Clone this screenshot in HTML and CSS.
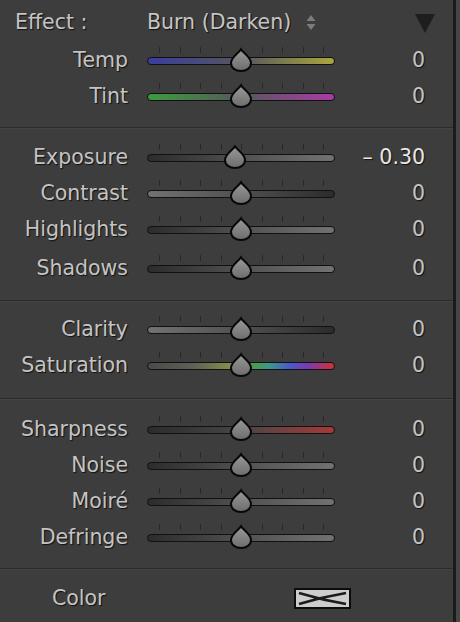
FILE: index.html
```html
<!DOCTYPE html>
<html>
<head>
<meta charset="utf-8">
<link rel="stylesheet" href="styles.css">
</head>
<body>
<div class="frame">
  <div class="panel">
    <section class="sec sec1">
      <div class="effect-row">
        <span class="effect-label">Effect :</span>
        <span class="effect-value">Burn (Darken)</span>
        <svg class="updown" width="10" height="16" viewBox="0 0 10 16"><path d="M5 0 L9.5 6 L0.5 6 Z M0.5 9 L9.5 9 L5 15 Z" fill="#7c7c7c"/></svg>
        <svg class="collapse" width="20" height="20" viewBox="0 0 20 20"><path d="M0 0 L20 0 L10 19 Z" fill="#1e1e1e"/></svg>
      </div>
      <div class="row">
        <span class="label">Temp</span>
        <div class="slider"><div class="ticks"><i></i><i></i><i></i><i></i><i></i><i></i><i></i><i></i><i></i></div><div class="track g-temp"></div><svg class="thumb" style="left:83px" width="22" height="24" viewBox="0 0 22 24"><use href="#thumb"/></svg></div>
        <span class="value">0</span>
      </div>
      <div class="row">
        <span class="label">Tint</span>
        <div class="slider"><div class="ticks"><i></i><i></i><i></i><i></i><i></i><i></i><i></i><i></i><i></i></div><div class="track g-tint"></div><svg class="thumb" style="left:83px" width="22" height="24" viewBox="0 0 22 24"><use href="#thumb"/></svg></div>
        <span class="value">0</span>
      </div>
    </section>
    <section class="sec sec2">
      <div class="row">
        <span class="label">Exposure</span>
        <div class="slider"><div class="ticks"><i></i><i></i><i></i><i></i><i></i><i></i><i></i><i></i><i></i></div><div class="track g-dl"></div><svg class="thumb" style="left:77px" width="22" height="24" viewBox="0 0 22 24"><use href="#thumb"/></svg></div>
        <span class="value bright">– 0.30</span>
      </div>
      <div class="row">
        <span class="label">Contrast</span>
        <div class="slider"><div class="ticks"><i></i><i></i><i></i><i></i><i></i><i></i><i></i><i></i><i></i></div><div class="track g-ld"></div><svg class="thumb" style="left:83px" width="22" height="24" viewBox="0 0 22 24"><use href="#thumb"/></svg></div>
        <span class="value">0</span>
      </div>
      <div class="row">
        <span class="label">Highlights</span>
        <div class="slider"><div class="ticks"><i></i><i></i><i></i><i></i><i></i><i></i><i></i><i></i><i></i></div><div class="track g-dl"></div><svg class="thumb" style="left:83px" width="22" height="24" viewBox="0 0 22 24"><use href="#thumb"/></svg></div>
        <span class="value">0</span>
      </div>
      <div class="row row-shadows">
        <span class="label">Shadows</span>
        <div class="slider"><div class="ticks"><i></i><i></i><i></i><i></i><i></i><i></i><i></i><i></i><i></i></div><div class="track g-dl"></div><svg class="thumb" style="left:83px" width="22" height="24" viewBox="0 0 22 24"><use href="#thumb"/></svg></div>
        <span class="value">0</span>
      </div>
    </section>
    <section class="sec sec3">
      <div class="row">
        <span class="label">Clarity</span>
        <div class="slider"><div class="ticks"><i></i><i></i><i></i><i></i><i></i><i></i><i></i><i></i><i></i></div><div class="track g-ld"></div><svg class="thumb" style="left:83px" width="22" height="24" viewBox="0 0 22 24"><use href="#thumb"/></svg></div>
        <span class="value">0</span>
      </div>
      <div class="row">
        <span class="label">Saturation</span>
        <div class="slider"><div class="ticks"><i></i><i></i><i></i><i></i><i></i><i></i><i></i><i></i><i></i></div><div class="track g-sat"></div><svg class="thumb" style="left:83px" width="22" height="24" viewBox="0 0 22 24"><use href="#thumb"/></svg></div>
        <span class="value">0</span>
      </div>
    </section>
    <section class="sec sec4">
      <div class="row">
        <span class="label">Sharpness</span>
        <div class="slider"><div class="ticks"><i></i><i></i><i></i><i></i><i></i><i></i><i></i><i></i><i></i></div><div class="track g-sharp"></div><svg class="thumb" style="left:83px" width="22" height="24" viewBox="0 0 22 24"><use href="#thumb"/></svg></div>
        <span class="value">0</span>
      </div>
      <div class="row">
        <span class="label">Noise</span>
        <div class="slider"><div class="ticks"><i></i><i></i><i></i><i></i><i></i><i></i><i></i><i></i><i></i></div><div class="track g-dl"></div><svg class="thumb" style="left:83px" width="22" height="24" viewBox="0 0 22 24"><use href="#thumb"/></svg></div>
        <span class="value">0</span>
      </div>
      <div class="row">
        <span class="label">Moiré</span>
        <div class="slider"><div class="ticks"><i></i><i></i><i></i><i></i><i></i><i></i><i></i><i></i><i></i></div><div class="track g-dl"></div><svg class="thumb" style="left:83px" width="22" height="24" viewBox="0 0 22 24"><use href="#thumb"/></svg></div>
        <span class="value">0</span>
      </div>
      <div class="row">
        <span class="label">Defringe</span>
        <div class="slider"><div class="ticks"><i></i><i></i><i></i><i></i><i></i><i></i><i></i><i></i><i></i></div><div class="track g-dl"></div><svg class="thumb" style="left:83px" width="22" height="24" viewBox="0 0 22 24"><use href="#thumb"/></svg></div>
        <span class="value">0</span>
      </div>
    </section>
    <section class="sec sec5">
      <div class="color-row">
        <span class="color-label">Color</span>
        <svg class="swatch" width="57" height="21" viewBox="0 0 57 21">
          <rect x="1" y="1" width="55" height="19" fill="#cdcdcd" stroke="#0c0c0c" stroke-width="2"/>
          <path d="M5 5 Q28 12 52 16 M5 16 Q28 9 52 5" fill="none" stroke="#1c1c1c" stroke-width="2.6"/>
        </svg>
      </div>
    </section>
  </div>
  <div class="edge"></div>
  <div class="edge2"></div>
</div>
<svg width="0" height="0" class="defs">
  <defs>
    <linearGradient id="tg" x1="0" y1="0" x2="0" y2="1">
      <stop offset="0" stop-color="#9a9a9a"/>
      <stop offset="1" stop-color="#6c6c6c"/>
    </linearGradient>
    <symbol id="thumb" viewBox="0 0 22 24">
      <path d="M11 1.2 C12.6 4.6 21 9 21 15 C21 20 16.5 23 11 23 C5.5 23 1 20 1 15 C1 9 9.4 4.6 11 1.2 Z" fill="url(#tg)" stroke="#080808" stroke-width="2"/>
    </symbol>
  </defs>
</svg>
</body>
</html>
```
FILE: styles.css
```css
html, body {
  margin: 0;
  padding: 0;
  background: #3d3d3d;
}
body {
  width: 460px;
  height: 622px;
  overflow: hidden;
  font-family: "DejaVu Sans", "Liberation Sans", sans-serif;
  font-size: 20.5px;
  color: #c4c4c4;
}
.frame {
  display: flex;
  height: 622px;
}
.panel {
  width: 453px;
  display: flex;
  flex-direction: column;
}
.edge {
  width: 3px;
  background: #1b1b1b;
}
.edge2 {
  width: 4px;
  background: #464646;
}
.defs {
  position: absolute;
}
.sec {
  display: flex;
  flex-direction: column;
}
.sec + .sec {
  border-top: 1px solid #2b2b2b;
  box-shadow: inset 0 1px 0 #444;
}
.sec1 { padding: 4px 0 13px; }
.sec2 { padding: 11px 0 14px; }
.sec3 { padding: 10px 0 15px; }
.sec4 { padding: 12px 0 13px; }
.sec5 { padding: 11px 0 0; flex: 1; }

.effect-row {
  height: 36px;
  display: flex;
  align-items: center;
  margin-bottom: 2px;
}
.effect-label {
  margin-left: 15px;
  width: 132px;
  text-shadow: 1px 1px 1px #111;
}
.effect-value {
  text-shadow: 1px 1px 1px #111;
}
.updown {
  margin-left: 15px;
  margin-top: 1px;
}
.collapse {
  margin-left: 99px;
  margin-top: 3px;
}

.row {
  height: 36px;
  display: flex;
  align-items: center;
}
.row-shadows {
  margin-top: 3px;
}
.label {
  width: 128px;
  text-align: right;
  text-shadow: 1px 1px 1px #111;
}
.slider {
  position: relative;
  width: 188px;
  margin-left: 19px;
  align-self: stretch;
  padding-top: 5px;
  box-sizing: border-box;
}
.ticks {
  height: 6px;
  display: flex;
  justify-content: space-between;
  padding: 0 11px 0 12px;
  margin-bottom: 4px;
}
.ticks i {
  display: block;
  width: 1px;
  background: #282828;
}
.track {
  height: 8px;
  box-sizing: border-box;
  border: 1px solid #111;
  border-radius: 4px;
}
.thumb {
  position: absolute;
  top: 6px;
}
.value {
  width: 90px;
  text-align: right;
  text-shadow: 1px 1px 1px #111;
}
.bright {
  color: #e8e8e8;
}

.g-temp { background: linear-gradient(to right, #3a3e9c, #56565e 50%, #a9a63e); }
.g-tint { background: linear-gradient(to right, #3c9c3c, #57585a 50%, #aa3aaa); }
.g-dl { background: linear-gradient(to right, #2c2c2c, #505050 50%, #727272); }
.g-ld { background: linear-gradient(to right, #727272, #505050 50%, #2c2c2c); }
.g-sat { background: linear-gradient(to right, #4a4a4a 0%, #5e6154 25%, #86944e 46%, #4a9a50 57%, #3c9a8a 65%, #4a5ac8 76%, #7a3ab0 86%, #d03232 100%); }
.g-sharp { background: linear-gradient(to right, #2c2c2c, #464646 50%, #a63838); }

.color-row {
  height: 36px;
  display: flex;
  align-items: center;
}
.color-label {
  margin-left: 52px;
  width: 242px;
  text-shadow: 1px 1px 1px #111;
}
.swatch {
  margin-top: 1px;
}
```
